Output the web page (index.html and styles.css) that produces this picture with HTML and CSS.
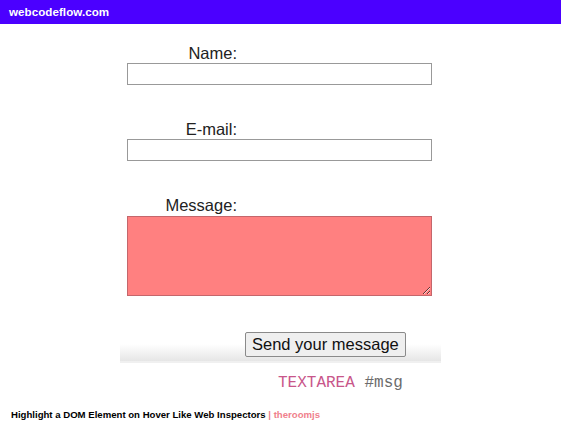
FILE: index.html
```html
<!DOCTYPE html>
<html>
<head>
<meta charset="utf-8">
<link rel="stylesheet" href="styles.css">
</head>
<body>
<header class="topbar">webcodeflow.com</header>
<main class="page">
  <form class="form">
    <div class="field">
      <label class="label">Name:</label>
      <input class="input" type="text">
    </div>
    <div class="field">
      <label class="label">E-mail:</label>
      <input class="input" type="text">
    </div>
    <div class="field">
      <label class="label">Message:</label>
      <textarea class="textarea" id="msg"></textarea>
    </div>
    <div class="actions">
      <button class="button" type="button">Send your message</button>
    </div>
  </form>
  <div class="inspect"><span class="tag">TEXTAREA</span> <span class="id">#msg</span></div>
</main>
<footer class="footer"><b>Highlight a DOM Element on Hover Like Web Inspectors</b> <span class="src">| theroomjs</span></footer>
</body>
</html>
```
FILE: styles.css
```css
html, body { margin: 0; padding: 0; background: #fff; }
body { width: 561px; height: 431px; overflow: hidden; font-family: "Liberation Sans", Arial, sans-serif; color: #222; }

.topbar {
  height: 24px;
  background: #4b00ff;
  color: #fff;
  font: bold 11.6px/24px "Liberation Sans", Arial, sans-serif;
  padding-left: 9px;
  letter-spacing: 0.05px;
}

.page { display: flex; flex-direction: column; align-items: center; }

.form {
  width: 321px;
  margin-top: 19px;
  display: flex;
  flex-direction: column;
  background: linear-gradient(to bottom, #fff 0, #fff calc(100% - 19px), #e6e6e6 calc(100% - 2px), #f0f0f0 calc(100% - 2px), #f0f0f0 100%);
}

.field { display: flex; flex-direction: column; margin-bottom: 34px; }
.field:nth-child(3) { margin-bottom: 36px; }

.label {
  width: 117px;
  text-align: right;
  font-size: 16.5px;
  line-height: 20px;
  color: #222;
}

.input {
  box-sizing: border-box;
  width: 305px;
  height: 22px;
  margin: 0 0 0 7px;
  border: 1px solid #999;
  padding: 0;
  background: #fff;
}

.textarea {
  box-sizing: border-box;
  width: 305px;
  height: 80px;
  margin: 1px 0 0 7px;
  border: 1px solid #c4666b;
  background: #ff8080;
  padding: 0;
  resize: both;
  display: block;
}

.actions { padding: 0 0 6px 125px; }

.button {
  box-sizing: border-box;
  height: 25px;
  padding: 0 6px;
  border: 1px solid #8a8a8a;
  border-radius: 2px;
  background: #efefef;
  color: #111;
  font: 16.5px/23px "Liberation Sans", Arial, sans-serif;
}

.inspect {
  width: 321px;
  box-sizing: border-box;
  padding-left: 158px;
  margin-top: 11px;
  font: 16px/18px "Liberation Mono", "Courier New", monospace;
}
.tag { color: #c8568a; }
.id { color: #6b6b6b; }

.footer {
  margin-top: 17px;
  padding-left: 11px;
  font: 9.6px/12px "Liberation Sans", Arial, sans-serif;
  color: #000;
}
.footer b { font-weight: bold; }
.src { color: #f07f8c; font-weight: bold; }
```
